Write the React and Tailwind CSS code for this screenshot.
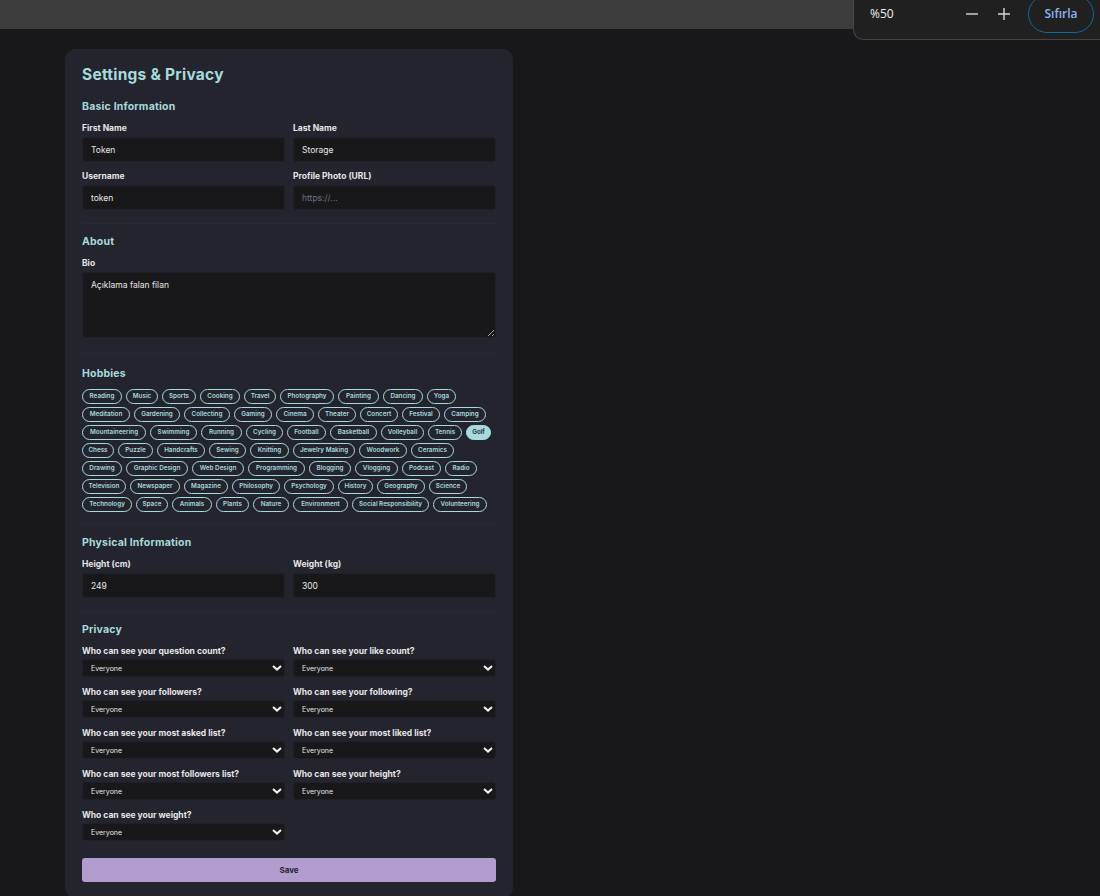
import React from "react";

const font = "[font-family:'Inter','Liberation_Sans',sans-serif]";

const hobbies = [
  [["Reading","w-[40px]"],["Music","w-[32px]"],["Sports","w-[34px]"],["Cooking","w-[40px]"],["Travel","w-[32px]"],["Photography","w-[54px]"],["Painting","w-[41px]"],["Dancing","w-[40px]"],["Yoga","w-[29px]"]],
  [["Meditation","w-[48px]"],["Gardening","w-[46px]"],["Collecting","w-[46px]"],["Gaming","w-[38px]"],["Cinema","w-[38px]"],["Theater","w-[38px]"],["Concert","w-[38px]"],["Festival","w-[38px]"],["Camping","w-[42px]"]],
  [["Mountaineering","w-[64px]"],["Swimming","w-[47px]"],["Running","w-[41px]"],["Cycling","w-[37px]"],["Football","w-[39px]"],["Basketball","w-[47px]"],["Volleyball","w-[43px]"],["Tennis","w-[34px]"],["Golf","w-[25px]"]],
  [["Chess","w-[32px]"],["Puzzle","w-[35px]"],["Handcrafts","w-[48px]"],["Sewing","w-[37px]"],["Knitting","w-[39px]"],["Jewelry Making","w-[62px]"],["Woodwork","w-[48px]"],["Ceramics","w-[43px]"]],
  [["Drawing","w-[40px]"],["Graphic Design","w-[62px]"],["Web Design","w-[52px]"],["Programming","w-[57px]"],["Blogging","w-[42px]"],["Vlogging","w-[43px]"],["Podcast","w-[39px]"],["Radio","w-[32px]"]],
  [["Television","w-[44px]"],["Newspaper","w-[50px]"],["Magazine","w-[44px]"],["Philosophy","w-[48px]"],["Psychology","w-[50px]"],["History","w-[35px]"],["Geography","w-[48px]"],["Science","w-[38px]"]],
  [["Technology","w-[50px]"],["Space","w-[32px]"],["Animals","w-[40px]"],["Plants","w-[33px]"],["Nature","w-[36px]"],["Environment","w-[55px]"],["Social Responsibility","w-[77px]"],["Volunteering","w-[54px]"]],
];

const privacy = [
  "Who can see your question count?","Who can see your like count?",
  "Who can see your followers?","Who can see your following?",
  "Who can see your most asked list?","Who can see your most liked list?",
  "Who can see your most followers list?","Who can see your height?",
  "Who can see your weight?",
];

function Heading({ children, className = "" }) {
  return <h3 className={`text-[10.5px] leading-[14px] font-bold tracking-[0.2px] text-[#a8dadc] ${className}`}>{children}</h3>;
}

function Field({ label, value, placeholder }) {
  return (
    <div className="flex flex-col">
      <label className="text-[8.5px] leading-[11px] mb-[3px] font-bold text-[#e6e6e6]">{label}</label>
      <input readOnly value={value} placeholder={placeholder}
        className="h-[25px] w-full rounded-[3px] border border-[#1f2027] bg-[#18181b] pl-[8px] pr-[8px] text-[8.5px] text-[#e6e6e6] outline-none placeholder:text-[#6b7280]" />
    </div>
  );
}

function Sel({ label }) {
  return (
    <div className="flex flex-col">
      <label className="text-[8.5px] leading-[11px] mb-[2px] font-bold text-[#e6e6e6]">{label}</label>
      <div className="relative">
        <select defaultValue="Everyone" className="block h-[18px] w-full appearance-none rounded-[3px] border border-[#1f2027] bg-[#18181b] pl-[8px] pr-[8px] pt-[2px] text-[7px] text-[#e6e6e6] outline-none">
          <option>Everyone</option>
        </select>
        <svg viewBox="0 0 10 6" className="absolute right-[3px] top-[6px] h-[6px] w-[10px]" fill="none" stroke="#f2f2f2" strokeWidth="2">
          <path d="M1 1l4 3.6L9 1" />
        </svg>
      </div>
    </div>
  );
}

export default function App() {
  return (
    <div className={`min-h-[896px] bg-[#18181b] ${font} relative overflow-hidden`}>
      <div className="h-[29px] bg-[#3c3c3c]" />
      <div className="absolute right-0 top-0 flex h-[40px] w-[247px] items-center rounded-bl-[10px] border-b border-l border-[#454545] bg-[#202020] pb-[12px] pl-[16px] pr-[6px] font-['Open_Sans',sans-serif]">
        <span className="text-[12px] text-[#f0f0f0]">%50</span>
        <span className="ml-auto flex items-center gap-[16px] text-[#d8d8d8]">
          <svg width="16" height="16" viewBox="0 0 16 16" stroke="currentColor" strokeWidth="1.4"><path d="M2 8h12" /></svg>
          <svg width="16" height="16" viewBox="0 0 16 16" stroke="currentColor" strokeWidth="1.4"><path d="M2 8h12M8 2v12" /></svg>
        </span>
        <span className="ml-[16px] flex h-[38px] w-[66px] shrink-0 items-center justify-center rounded-full border border-[#0b6a9e] text-[12px] font-semibold text-[#8ab4f8]">Sıfırla</span>
      </div>

      <div className="ml-[65px] mt-[20px] h-[849px] w-[448px] rounded-[10px] bg-[#23242e] px-[17px] pt-[16px]">
        <h2 className="text-[15.5px] leading-[20px] font-bold tracking-[0.25px] text-[#a8dadc]">Settings &amp; Privacy</h2>

        <Heading className="mt-[15px]">Basic Information</Heading>
        <div className="mt-[9px] grid grid-cols-2 gap-x-[8px] gap-y-[9px]">
          <Field label="First Name" value="Token" />
          <Field label="Last Name" value="Storage" />
          <Field label="Username" value="token" />
          <Field label="Profile Photo (URL)" value="" placeholder="https://..." />
        </div>
        <div className="mt-[13px] h-px bg-[#282932]" />

        <Heading className="mt-[11px]">About</Heading>
        <label className="mt-[9px] mb-[3px] block text-[8.5px] leading-[11px] font-bold text-[#e6e6e6]">Bio</label>
        <textarea readOnly defaultValue="Açıklama falan filan" className="block h-[66px] w-full rounded-[3px] border border-[#1f2027] bg-[#18181b] px-[8px] py-[6px] text-[8.5px] text-[#e6e6e6] outline-none" />
        <div className="mt-[15px] h-px bg-[#282932]" />

        <Heading className="mt-[13px]">Hobbies</Heading>
        <div className="mt-[8px] flex flex-col gap-[3px]">
          {hobbies.map((row, i) => (
            <div key={i} className="flex gap-[4px]">
              {row.map(([h, w]) => (
                <span key={h} className={`flex h-[15px] ${w} items-center justify-center rounded-full border border-[#a8dadc] text-[6.3px] font-semibold whitespace-nowrap ${h === "Golf" ? "bg-[#a8dadc] text-[#23242e]" : "text-[#a8dadc]"}`}>{h}</span>
              ))}
            </div>
          ))}
        </div>
        <div className="mt-[12px] h-px bg-[#282932]" />

        <Heading className="mt-[11px]">Physical Information</Heading>
        <div className="mt-[9px] grid grid-cols-2 gap-x-[8px]">
          <Field label="Height (cm)" value="249" />
          <Field label="Weight (kg)" value="300" />
        </div>
        <div className="mt-[13px] h-px bg-[#282932]" />

        <Heading className="mt-[11px]">Privacy</Heading>
        <div className="mt-[9px] grid grid-cols-2 gap-x-[8px] gap-y-[10px]">
          {privacy.map((p) => <Sel key={p} label={p} />)}
        </div>

        <button className="mt-[17px] h-[24px] w-full rounded-[3px] bg-[#b39cd0] text-[8px] font-bold text-[#23242e]">Save</button>
      </div>
    </div>
  );
}
